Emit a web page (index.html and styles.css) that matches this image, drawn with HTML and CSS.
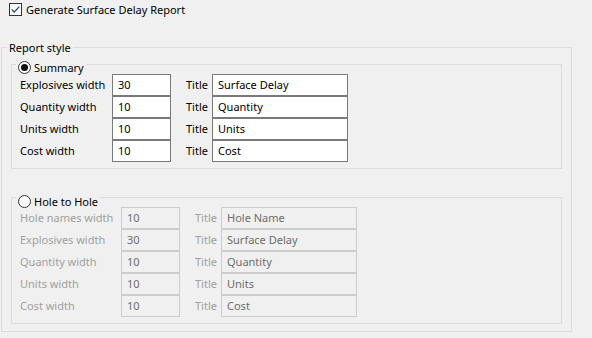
FILE: index.html
```html
<!DOCTYPE html>
<html lang="en">
<head>
    <meta charset="UTF-8">
    <title>Surface Delay Report</title>
    <link rel="stylesheet" href="styles.css">
</head>
<body>
    <label class="check-row">
        <span class="checkbox">
            <svg width="13" height="13" viewBox="0 0 13 13">
                <rect x="0.5" y="0.5" width="12" height="12" fill="#fff" stroke="#333"/>
                <path d="M2.6 6.4 L5.2 9 L10.4 3.6" fill="none" stroke="#1f4f82" stroke-width="1.3"/>
            </svg>
        </span>
        Generate Surface Delay Report
    </label>

    <div class="group outer">
        <span class="group-title">Report style</span>

        <div class="group inner summary">
            <span class="group-title radio-title"><span class="radio checked"></span>Summary</span>
            <div class="rows">
                <span class="lbl">Explosives width</span><input class="num" value="30"><span class="ttl">Title</span><input class="txt" value="Surface Delay">
                <span class="lbl">Quantity width</span><input class="num" value="10"><span class="ttl">Title</span><input class="txt" value="Quantity">
                <span class="lbl">Units width</span><input class="num" value="10"><span class="ttl">Title</span><input class="txt" value="Units">
                <span class="lbl">Cost width</span><input class="num" value="10"><span class="ttl">Title</span><input class="txt" value="Cost">
            </div>
        </div>

        <div class="group inner hole">
            <span class="group-title radio-title"><span class="radio"></span>Hole to Hole</span>
            <div class="rows off">
                <span class="lbl">Hole names width</span><input class="num" value="10" disabled><span class="ttl">Title</span><input class="txt" value="Hole Name" disabled>
                <span class="lbl">Explosives width</span><input class="num" value="30" disabled><span class="ttl">Title</span><input class="txt" value="Surface Delay" disabled>
                <span class="lbl">Quantity width</span><input class="num" value="10" disabled><span class="ttl">Title</span><input class="txt" value="Quantity" disabled>
                <span class="lbl">Units width</span><input class="num" value="10" disabled><span class="ttl">Title</span><input class="txt" value="Units" disabled>
                <span class="lbl">Cost width</span><input class="num" value="10" disabled><span class="ttl">Title</span><input class="txt" value="Cost" disabled>
            </div>
        </div>
    </div>
</body>
</html>
```

FILE: styles.css
```css
body {
    margin: 0;
    background: #f0f0f0;
    font-family: "Noto Sans", sans-serif;
    font-size: 11px;
    color: #000;
    white-space: nowrap;
}
.check-row {
    display: flex;
    align-items: center;
    gap: 4px;
    height: 13px;
    line-height: 13px;
    padding: 3px 0 0 9px;
    margin-bottom: 31px;
}
.checkbox svg {
    display: block;
}
.group {
    position: relative;
    border: 1px solid #dcdcdc;
    box-sizing: border-box;
}
.group-title {
    position: absolute;
    top: -8px;
    left: 5px;
    padding: 0 2px;
    line-height: 15px;
    background: #f0f0f0;
    display: flex;
    align-items: center;
}
.outer {
    margin-left: 1px;
    width: 571px;
    padding: 16px 9px 7px;
}
.inner {
    padding: 9px 8px 6px;
}
.hole {
    margin-top: 28px;
}
.radio-title {
    top: -5px;
    left: 4px;
    gap: 3px;
}
.hole .radio-title {
    top: -4px;
}
.radio {
    width: 11px;
    height: 11px;
    border: 1px solid #333;
    border-radius: 50%;
    background: #fff;
    display: flex;
    align-items: center;
    justify-content: center;
}
.radio.checked::after {
    content: "";
    width: 7px;
    height: 7px;
    border-radius: 50%;
    background: #111;
}
.rows {
    display: grid;
    grid-template-columns: 92px 59px 41px 136px;
    grid-auto-rows: 22px;
    align-items: center;
}
.rows.off {
    grid-template-columns: 101px 59px 41px 136px;
}
.lbl,
.ttl {
    padding-bottom: 2px;
}
.ttl {
    padding-left: 15px;
}
.rows input {
    box-sizing: border-box;
    height: 22px;
    width: 100%;
    margin: 0;
    padding: 0 5px 2px;
    border: 1px solid #7a7a7a;
    background: #fff;
    font: inherit;
    color: #000;
    outline: none;
}
.rows.off .lbl,
.rows.off .ttl {
    color: #a0a0a0;
}
.rows.off input {
    border-color: #cccccc;
    background: #f0f0f0;
    color: #6d6d6d;
}
```
